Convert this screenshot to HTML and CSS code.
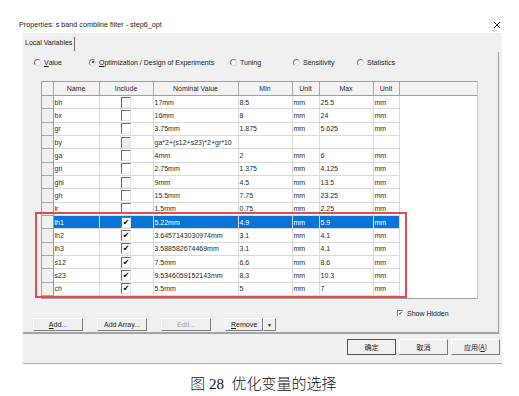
FILE: index.html
```html
<!DOCTYPE html>
<html lang="zh">
<head>
    <meta charset="UTF-8">
    <title>Properties</title>
    <link rel="stylesheet" href="styles.css">
</head>
<body>
    <div class="titlebar">
        <div class="title-text">Properties: s band combline filter - step6_opt</div>
        <svg class="close-icon" width="8" height="8" viewBox="0 0 8 8">
            <path d="M1 1 L7 7 M7 1 L1 7" stroke="#333" stroke-width="1" fill="none"/>
        </svg>
    </div>

    <div class="dialog">
        <div class="tabs">
            <span class="tab">Local Variables</span>
        </div>

        <div class="panel">
            <div class="radio-row">
                <label class="radio r-value"><span class="dot-box"></span><u>V</u>alue</label>
                <label class="radio r-opt"><span class="dot-box checked"></span><u>O</u>ptimization / Design of Experiments</label>
                <label class="radio r-tune"><span class="dot-box"></span>Tuning</label>
                <label class="radio r-sens"><span class="dot-box"></span>Sensitivity</label>
                <label class="radio r-stat"><span class="dot-box"></span>Statistics</label>
            </div>

            <div class="grid-wrap">
                <table class="grid">
                    <colgroup>
                        <col class="c-hdr">
                        <col class="c-name">
                        <col class="c-inc">
                        <col class="c-nom">
                        <col class="c-min">
                        <col class="c-unit">
                        <col class="c-max">
                        <col class="c-unit2">
                        <col>
                    </colgroup>
                    <thead>
                        <tr>
                            <th class="rh"></th>
                            <th>Name</th>
                            <th>Include</th>
                            <th>Nominal Value</th>
                            <th>Min</th>
                            <th>Unit</th>
                            <th>Max</th>
                            <th>Unit</th>
                            <th class="fill"></th>
                        </tr>
                    </thead>
                    <tbody>
                        <tr><td class="rh"></td><td>bh</td><td class="inc"><span class="cb"></span></td><td>17mm</td><td>8.5</td><td>mm</td><td>25.5</td><td>mm</td><td class="fill"></td></tr>
                        <tr><td class="rh"></td><td>bx</td><td class="inc"><span class="cb"></span></td><td>16mm</td><td>8</td><td>mm</td><td>24</td><td>mm</td><td class="fill"></td></tr>
                        <tr><td class="rh"></td><td>gr</td><td class="inc"><span class="cb"></span></td><td>3.75mm</td><td>1.875</td><td>mm</td><td>5.625</td><td>mm</td><td class="fill"></td></tr>
                        <tr><td class="rh"></td><td>by</td><td class="inc"><span class="cb off"></span></td><td>ga*2+(s12+s23)*2+gr*10</td><td></td><td></td><td></td><td></td><td class="fill"></td></tr>
                        <tr><td class="rh"></td><td>ga</td><td class="inc"><span class="cb"></span></td><td>4mm</td><td>2</td><td>mm</td><td>6</td><td>mm</td><td class="fill"></td></tr>
                        <tr><td class="rh"></td><td>gri</td><td class="inc"><span class="cb"></span></td><td>2.75mm</td><td>1.375</td><td>mm</td><td>4.125</td><td>mm</td><td class="fill"></td></tr>
                        <tr><td class="rh"></td><td>ghi</td><td class="inc"><span class="cb"></span></td><td>9mm</td><td>4.5</td><td>mm</td><td>13.5</td><td>mm</td><td class="fill"></td></tr>
                        <tr><td class="rh"></td><td>gh</td><td class="inc"><span class="cb"></span></td><td>15.5mm</td><td>7.75</td><td>mm</td><td>23.25</td><td>mm</td><td class="fill"></td></tr>
                        <tr><td class="rh"></td><td>lr</td><td class="inc"><span class="cb"></span></td><td>1.5mm</td><td>0.75</td><td>mm</td><td>2.25</td><td>mm</td><td class="fill"></td></tr>
                        <tr class="selected"><td class="rh"></td><td>lh1</td><td class="inc"><span class="cb">&#10004;</span></td><td>5.22mm</td><td>4.9</td><td>mm</td><td>5.9</td><td>mm</td><td class="fill"></td></tr>
                        <tr><td class="rh"></td><td>lh2</td><td class="inc"><span class="cb">&#10004;</span></td><td>3.6457143030974mm</td><td>3.1</td><td>mm</td><td>4.1</td><td>mm</td><td class="fill"></td></tr>
                        <tr><td class="rh"></td><td>lh3</td><td class="inc"><span class="cb">&#10004;</span></td><td>3.588582674469mm</td><td>3.1</td><td>mm</td><td>4.1</td><td>mm</td><td class="fill"></td></tr>
                        <tr><td class="rh"></td><td>s12</td><td class="inc"><span class="cb">&#10004;</span></td><td>7.5mm</td><td>6.6</td><td>mm</td><td>8.6</td><td>mm</td><td class="fill"></td></tr>
                        <tr><td class="rh"></td><td>s23</td><td class="inc"><span class="cb">&#10004;</span></td><td>9.5346059152143mm</td><td>8.3</td><td>mm</td><td>10.3</td><td>mm</td><td class="fill"></td></tr>
                        <tr><td class="rh"></td><td>ch</td><td class="inc"><span class="cb">&#10004;</span></td><td>5.5mm</td><td>5</td><td>mm</td><td>7</td><td>mm</td><td class="fill"></td></tr>
                    </tbody>
                </table>
                <div class="highlight"></div>
            </div>

            <div class="hidden-row">
                <span class="small-cb">&#10004;</span>Show Hidden
            </div>

            <div class="btn-row">
                <button class="btn"><u>A</u>dd...</button>
                <button class="btn">Add Array...</button>
                <button class="btn disabled">Edit...</button>
                <span class="split-btn">
                    <button class="btn btn-main"><u>R</u>emove</button>
                    <button class="btn btn-arrow">&#9660;</button>
                </span>
            </div>
        </div>

        <div class="footer">
            <button class="btn big default">确定</button>
            <button class="btn big">取消</button>
            <button class="btn big">应用(<u>A</u>)</button>
        </div>
    </div>

    <div class="caption">图 28&nbsp; 优化变量的选择</div>
</body>
</html>
```

FILE: styles.css
```css
body {
    margin: 0;
    padding: 0;
    background: #fff;
    font-family: 'Liberation Sans', Arial, 'Noto Sans CJK SC', sans-serif;
    font-size: 7px;
    color: #1a1a1a;
    width: 519px;
    height: 396px;
    overflow: hidden;
}
.titlebar {
    height: 33px;
    display: flex;
    align-items: flex-start;
    box-sizing: border-box;
    padding-top: 20px;
}
.title-text {
    margin-left: 19px;
    width: 204px;
    white-space: nowrap;
    font-size: 7.2px;
    color: #222;
}
.close-icon {
    margin-left: 270px;
    margin-top: 1px;
}
.dialog {
    margin-left: 23px;
    width: 479px;
    height: 330px;
    background: #f0f0f0;
    border-bottom: 1px solid #a8a8a8;
    display: flex;
    flex-direction: column;
}
.tabs {
    height: 19px;
    display: flex;
    align-items: flex-end;
}
.tab {
    margin-left: 2px;
    padding-right: 2px;
    height: 14px;
    line-height: 12px;
    border-right: 1px solid #6a6a6a;
    margin-bottom: 1px;
}
.panel {
    height: 282px;
    width: 476px;
    box-sizing: border-box;
    border-right: 1px solid #9c9c9c;
    border-bottom: 2px solid #a4a4a4;
    position: relative;
}
.radio-row {
    display: flex;
    margin-top: 5px;
    height: 10px;
    align-items: center;
    padding-left: 11px;
}
.radio {
    display: flex;
    align-items: center;
    white-space: nowrap;
}
.r-value { width: 55px; }
.r-opt { width: 141px; }
.r-tune { width: 63px; }
.r-sens { width: 64px; }
.dot-box {
    width: 5px;
    height: 5px;
    border-radius: 50%;
    border: 1px solid #dcdcdc;
    border-top-color: #777;
    border-left-color: #777;
    margin-right: 3px;
    position: relative;
    background: #fafafa;
}
.dot-box.checked::after {
    content: "";
    position: absolute;
    left: 1.5px;
    top: 1.5px;
    width: 2px;
    height: 2px;
    border-radius: 50%;
    background: #222;
}
.grid-wrap {
    margin: 14px 0 0 18px;
    width: 437px;
    height: 218px;
    box-sizing: border-box;
    background: #fff;
    border: 1px solid #a0a0a0;
    border-right-color: #c8c8c8;
    position: relative;
}
.grid {
    border-collapse: collapse;
    table-layout: fixed;
    width: 435px;
    color: #2a2a2a;
}
.c-hdr { width: 11px; }
.c-name { width: 46px; }
.c-inc { width: 54px; }
.c-nom { width: 85px; }
.c-min { width: 54px; }
.c-unit { width: 27px; }
.c-max { width: 54px; }
.c-unit2 { width: 26px; }
.grid th {
    height: 13px;
    background: #f3f3f3;
    font-weight: normal;
    text-align: center;
    border-right: 1px solid #a8a8a8;
    border-bottom: 1px solid #a0a0a0;
    padding: 0;
}
.grid th.fill {
    border-right: none;
}
.grid td {
    height: 12.33px;
    padding: 0 0 0 1px;
    white-space: nowrap;
    overflow: hidden;
    border-right: 1px solid #dadada;
    border-bottom: 1px solid #dadada;
}
.grid td.rh {
    background: #f0f0f0;
    border-right: 1px solid #9a9a9a;
    border-bottom: 1px solid #a8a8a8;
}
.grid td.fill {
    border: none;
}
.grid td.inc {
    text-align: center;
    padding: 0;
}
.cb {
    display: inline-block;
    box-sizing: border-box;
    width: 10px;
    height: 11px;
    vertical-align: middle;
    background: #fff;
    border-top: 1px solid #6e6e6e;
    border-left: 1px solid #6e6e6e;
    border-right: 1px solid #e6e6e6;
    border-bottom: 1px solid #e6e6e6;
    color: #000;
    font-size: 8px;
    line-height: 10px;
    text-align: center;
    font-family: 'DejaVu Sans', sans-serif;
}
.cb.off {
    background: #ececec;
}
.selected td {
    background: #0a74d6;
    color: #fff;
}
.selected td.rh {
    background: #f0f0f0;
}
.selected td.fill {
    background: #fff;
}
.highlight {
    position: absolute;
    left: -7px;
    top: 130px;
    width: 368px;
    height: 82px;
    border: 2px solid #e24b4b;
    pointer-events: none;
}
.hidden-row {
    display: flex;
    align-items: center;
    height: 8px;
    margin: 10px 0 0 374px;
    white-space: nowrap;
}
.small-cb {
    display: inline-block;
    box-sizing: border-box;
    width: 6px;
    height: 6px;
    border-top: 1px solid #777;
    border-left: 1px solid #777;
    background: #fff;
    font-size: 5px;
    line-height: 5px;
    text-align: center;
    margin-right: 4px;
    font-family: 'DejaVu Sans', sans-serif;
}
.btn-row {
    display: flex;
    gap: 14px;
    margin: 1px 0 0 10px;
    height: 13px;
}
.btn {
    font-family: inherit;
    font-size: 7px;
    color: #1a1a1a;
    background: #f0f0f0;
    width: 50px;
    height: 13px;
    padding: 0;
    box-sizing: border-box;
    border: 1px solid;
    border-color: #ffffff #7a7a7a #7a7a7a #ffffff;
}
.btn.disabled {
    color: #a0a0a0;
}
.split-btn {
    display: flex;
}
.btn-main {
    width: 38px;
}
.btn-arrow {
    width: 13px;
    font-size: 5px;
}
.footer {
    display: flex;
    justify-content: flex-end;
    gap: 3px;
    padding: 5px 2px 0 0;
}
.btn.big {
    width: 49px;
    height: 16px;
    font-size: 7px;
    font-family: 'Noto Sans CJK SC', sans-serif;
}
.btn.default {
    border-color: #505050;
}
.caption {
    width: 527px;
    text-align: center;
    margin-top: 8px;
    font-family: 'Liberation Serif', 'Noto Sans CJK SC', serif;
    font-size: 15px;
    font-weight: 300;
    color: #111;
}
```
